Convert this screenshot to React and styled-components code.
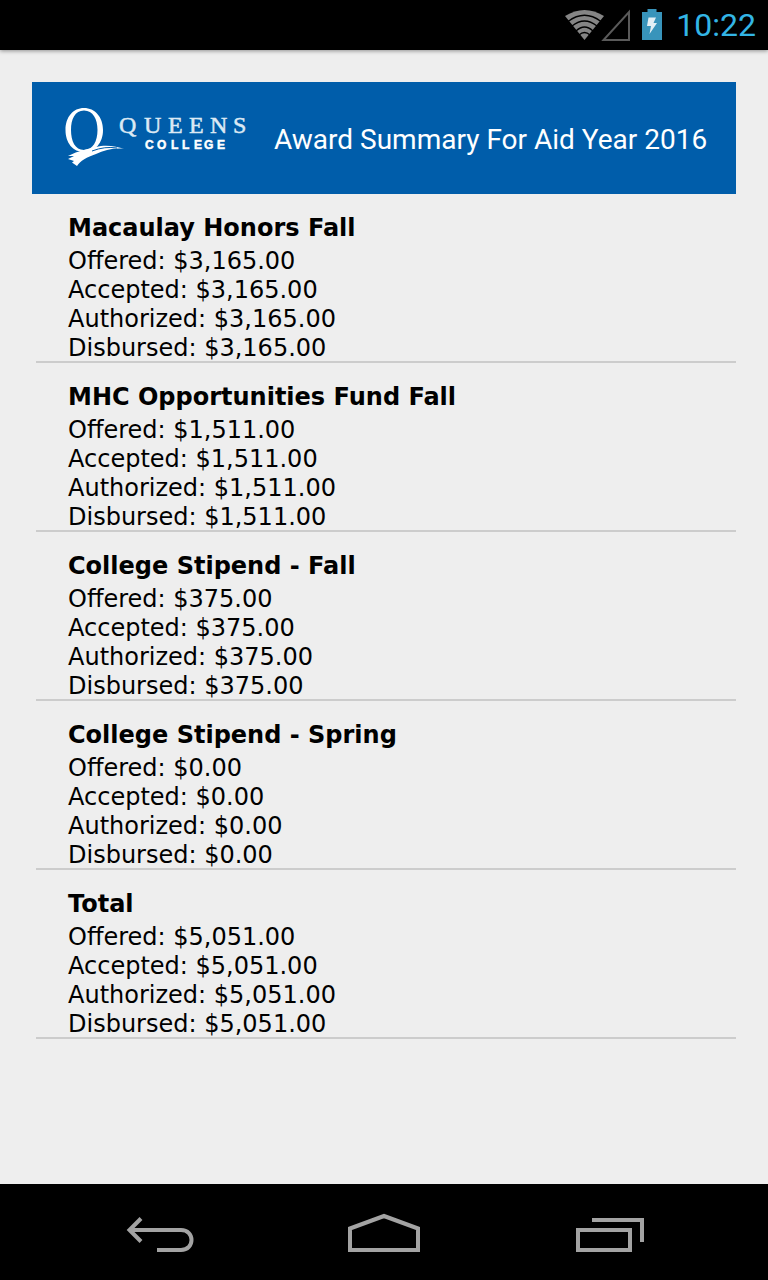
import React from "react";
import styled, { createGlobalStyle } from "styled-components";

const GlobalStyle = createGlobalStyle`
  *, *::before, *::after { box-sizing: border-box; }
  body { margin: 0; background: #eeeeee; }
`;

const Screen = styled.div`
  min-height: 100vh;
  display: flex;
  flex-direction: column;
  background: #eeeeee;
  color: #000;
  font-family: "DejaVu Sans", Verdana, sans-serif;
`;

const StatusBar = styled.header`
  display: flex;
  justify-content: flex-end;
  align-items: center;
  height: 50px;
  padding-right: 12px;
  background: #000;
  box-shadow: 0 1px 4px rgba(0, 0, 0, 0.4);
`;

const StatusIcons = styled.svg`
  width: 104px;
  height: 50px;
  margin-right: 8px;
`;

const Clock = styled.time`
  font: 400 32px/50px Roboto, sans-serif;
  color: #33b5e5;
`;

const Content = styled.main`
  flex: 1;
  padding: 32px;
`;

const Banner = styled.div`
  display: flex;
  align-items: center;
  height: 112px;
  padding: 0 22px 0 28px;
  background: #005daa;
`;

const Logo = styled.svg`
  flex: none;
  width: 192px;
  height: 72px;
  margin-right: 22px;
`;

const BannerTitle = styled.h1`
  margin: 0;
  padding-top: 4px;
  font: 400 28px/36px Roboto, sans-serif;
  color: #fff;
`;

const AwardList = styled.ul`
  margin: 0 0 0 4px;
  padding: 0;
  list-style: none;
`;

const Award = styled.li`
  padding: 20px 0 0 32px;
  border-bottom: 2px solid #cccccc;
`;

const AwardName = styled.h2`
  margin: 0 0 4px;
  font-size: 24px;
  font-weight: 700;
  line-height: 29px;
`;

const AwardDetails = styled.div`
  margin-bottom: -2px;
`;

const AwardLine = styled.p`
  margin: 0;
  font-size: 24px;
  line-height: 29px;
`;

const NavBar = styled.nav`
  display: grid;
  grid-template-columns: repeat(3, 1fr);
  justify-items: center;
  height: 96px;
  padding: 0 48px;
  background: #000;
`;

const NavButton = styled.button`
  width: 96px;
  height: 96px;
  padding: 0;
  border: 0;
  background: none;
  color: #a3a3a3;
`;

const NavIcon = styled.svg`
  display: block;
  width: 96px;
  height: 96px;
  fill: none;
  stroke: currentColor;
  stroke-width: 4;
`;

const awards = [
  { name: "Macaulay Honors Fall", amount: "$3,165.00" },
  { name: "MHC Opportunities Fund Fall", amount: "$1,511.00" },
  { name: "College Stipend - Fall", amount: "$375.00" },
  { name: "College Stipend - Spring", amount: "$0.00" },
  { name: "Total", amount: "$5,051.00" },
];

const stages = ["Offered", "Accepted", "Authorized", "Disbursed"];

function DeviceStatus() {
  return (
    <StatusIcons viewBox="0 0 104 50" aria-hidden="true">
      <path d="M1 16 Q20.500 4 40 16 L20.500 40Z" fill="#858585" />
      <g fill="none" stroke="#000" strokeWidth="1.300">
        <path d="M4 21.500 Q20.500 9 37 21.500" />
        <path d="M8 26 Q20.500 16 33 26" />
        <path d="M12 31 Q20.500 23 29 31" />
        <path d="M15 35 Q20.500 30 26 35" />
      </g>
      <path d="M39.500 40 H65 V12Z" fill="none" stroke="#5a5a5a" strokeWidth="2" />
      <path d="M78 12 H83.500 V9 H92.500 V12 H98 V40 H78Z" fill="#3894bb" />
      <path d="M84.500 17.500 H92 L89.500 23 H93 L85.500 34 L87 26 H83Z" fill="#e2eff5" />
    </StatusIcons>
  );
}

function CollegeLogo() {
  return (
    <Logo viewBox="0 0 192 72" role="img" aria-label="Queens College">
      <path
        fillRule="evenodd"
        fill="#fff"
        d="M24 6 C35 6 43 15 43 28 C43 41 35 50 24 50 C13 50 5.500 41 5.500 28 C5.500 15 13 6 24 6Z M24 8.500 C15 8.500 11 17 11 28 C11 39 15 48 24 48 C33 48 37.500 39 37.500 28 C37.500 17 33 8.500 24 8.500Z"
      />
      <path
        fill="#fff"
        d="M8 54 C18 49 29 46 41 44 C50 43 58 45 64 46.700 C53 46 44 48 36 52 C27 55 20 59 17 64 L12 60.500 L14 59 L8 57 L14 54Z"
      />
      <path d="M32 49 Q45 44 57 46" fill="none" stroke="#005daa" strokeWidth="1" />
      <g
        fill="#dce9f4"
        stroke="#dce9f4"
        strokeWidth="0.500"
        fontFamily="Liberation Serif, serif"
        fontSize="24"
      >
        <text x="59 84 108 129 150 173" y="31">QUEENS</text>
      </g>
      <g
        fill="#fff"
        stroke="#fff"
        strokeWidth="0.500"
        fontFamily="Liberation Sans, sans-serif"
        fontSize="12"
        fontWeight="700"
      >
        <text x="85 97 111 122 134 144 157" y="47">COLLEGE</text>
      </g>
    </Logo>
  );
}

export default function App() {
  return (
    <Screen>
      <GlobalStyle />
      <StatusBar>
        <DeviceStatus />
        <Clock>10:22</Clock>
      </StatusBar>
      <Content>
        <Banner>
          <CollegeLogo />
          <BannerTitle>Award Summary For Aid Year 2016</BannerTitle>
        </Banner>
        <AwardList>
          {awards.map(({ name, amount }) => (
            <Award key={name}>
              <AwardName>{name}</AwardName>
              <AwardDetails>
                {stages.map((stage) => (
                  <AwardLine key={stage}>{`${stage}: ${amount}`}</AwardLine>
                ))}
              </AwardDetails>
            </Award>
          ))}
        </AwardList>
      </Content>
      <NavBar aria-label="System">
        <NavButton type="button" aria-label="Back">
          <NavIcon viewBox="0 0 96 96">
            <path d="M45 66 H69 C83 66 83 46 69 46 H18" />
            <path d="M29 34.500 L17.500 46 L29 57.500" />
          </NavIcon>
        </NavButton>
        <NavButton type="button" aria-label="Home">
          <NavIcon viewBox="0 0 96 96">
            <path d="M14 66 V44.500 L48 32 L82 44.500 V66Z" />
          </NavIcon>
        </NavButton>
        <NavButton type="button" aria-label="Recent apps">
          <NavIcon viewBox="0 0 96 96">
            <path d="M18 46 H70 V66 H18Z M32 36 H82 V58" />
          </NavIcon>
        </NavButton>
      </NavBar>
    </Screen>
  );
}
